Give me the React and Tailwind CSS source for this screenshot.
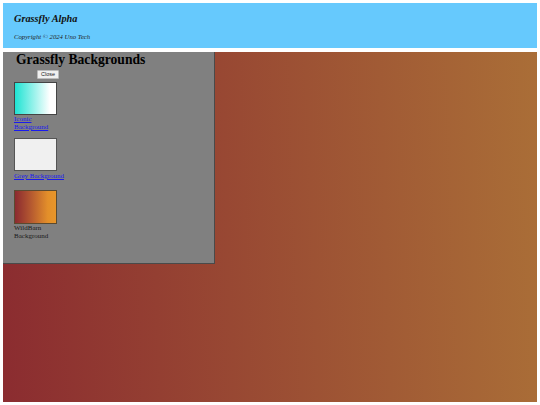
export default function App() {
  return (
    <div className="w-[540px] h-[405px] bg-white p-[3px] flex flex-col gap-[4px] overflow-hidden" style={{ fontFamily: '"Liberation Serif", serif' }}>
      <header className="h-[45px] bg-[#66c9fd] px-[11px] pt-[9px] flex flex-col shrink-0">
        <div className="text-[10.3px] leading-[14px] font-bold italic text-[#111]">Grassfly Alpha</div>
        <div className="text-[6.7px] leading-[8px] italic text-[#222] mt-[7px]">Copyright © 2024 Uno Tech</div>
      </header>
      <main className="flex-1 bg-[linear-gradient(88deg,#8b2c30,#aa6e37)] flex items-start">
        <div className="w-[212px] h-[212px] bg-[#808080] border-r border-b border-[#4a4a4a] pl-[11px] pt-[1px] flex flex-col">
          <h1 className="text-[13.6px] leading-[14px] font-bold text-black pl-[2px]">Grassfly Backgrounds</h1>
          <div className="pl-[23px] mt-[3px] flex">
            <button className="bg-[#f0f0f0] border border-[#bbb] rounded-[1px] text-[5.5px] leading-[7px] px-[3px] text-[#222]" style={{ fontFamily: '"Liberation Sans", sans-serif' }}>Close</button>
          </div>
          <div className="mt-[3px] flex flex-col">
            <div className="w-[43px] h-[33px] border border-[#444] bg-[linear-gradient(90deg,#1fe3d3,#ffffff_85%)]"></div>
            <a href="#" className="w-[40px] text-[7px] leading-[8px] text-[#1a1aee] underline">Iconic Background</a>
            <div className="w-[43px] h-[33px] border border-[#555] bg-[#f0f0f0] mt-[7px]"></div>
            <a href="#" className="w-[60px] text-[7px] leading-[8px] text-[#1a1aee] underline mt-[1px]">Grey Background</a>
            <div className="w-[43px] h-[34px] border border-[#5a4a30] bg-[linear-gradient(90deg,#8b2a30,#b65a30_40%,#e38f2a_80%,#e8962a)] mt-[10px]"></div>
            <div className="w-[40px] text-[7px] leading-[8px] text-[#1a1a1a]">WildBarn Background</div>
          </div>
        </div>
      </main>
    </div>
  );
}
